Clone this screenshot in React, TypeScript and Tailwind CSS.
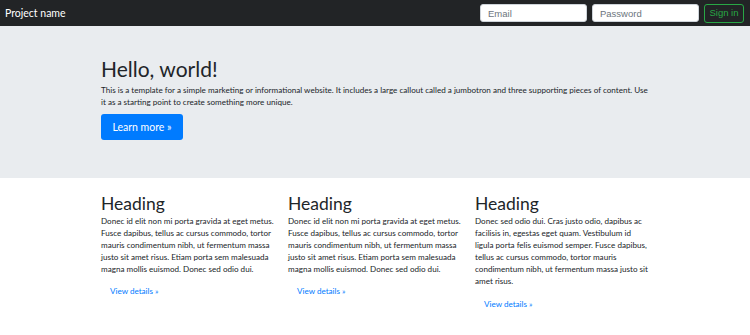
export default function App() {
  const cols = [
    'Donec id elit non mi porta gravida at eget metus. Fusce dapibus, tellus ac cursus commodo, tortor mauris condimentum nibh, ut fermentum massa justo sit amet risus. Etiam porta sem malesuada magna mollis euismod. Donec sed odio dui.',
    'Donec id elit non mi porta gravida at eget metus. Fusce dapibus, tellus ac cursus commodo, tortor mauris condimentum nibh, ut fermentum massa justo sit amet risus. Etiam porta sem malesuada magna mollis euismod. Donec sed odio dui.',
    'Donec sed odio dui. Cras justo odio, dapibus ac facilisis in, egestas eget quam. Vestibulum id ligula porta felis euismod semper. Fusce dapibus, tellus ac cursus commodo, tortor mauris condimentum nibh, ut fermentum massa justo sit amet risus.',
  ];

  return (
    <div className="w-[750px] h-[335px] bg-white text-[#212529] overflow-hidden font-['Lato',sans-serif]">
      {/* navbar */}
      <nav className="h-[26px] bg-[#222426] flex items-center justify-between pl-[5px] pr-[6px]">
        <span className="text-white text-[10.5px] leading-none">Project name</span>
        <div className="flex items-center gap-[5px] font-['Liberation_Sans',Arial,sans-serif]">
          <input
            className="w-[107px] h-[18px] bg-white rounded-[3px] border border-[#ced4da] px-[7px] text-[9.5px] text-[#495057] placeholder:text-[#6c757d] outline-none"
            placeholder="Email"
          />
          <input
            className="w-[107px] h-[18px] bg-white rounded-[3px] border border-[#ced4da] px-[7px] text-[9.5px] text-[#495057] placeholder:text-[#6c757d] outline-none"
            placeholder="Password"
          />
          <button className="w-[40px] h-[19px] rounded-[3px] border border-[#28a745] text-[#28a745] text-[9.5px] leading-none">
            Sign in
          </button>
        </div>
      </nav>

      {/* jumbotron */}
      <div className="h-[152px] bg-[#e9ecef] pt-[29px]">
        <div className="ml-[101px] w-[549px]">
          <h1 className="text-[21px] leading-[28px]">Hello, world!</h1>
          <p className="mt-[1px] text-[8.1px] leading-[12px] text-[#212529]">
            This is a template for a simple marketing or informational website. It includes a large callout called a jumbotron and three supporting pieces of content. Use it as a starting point to create something more unique.
          </p>
          <button className="mt-[6px] w-[82px] h-[26px] rounded-[3px] bg-[#007bff] text-white text-[10.5px] leading-none">
            Learn more »
          </button>
        </div>
      </div>

      {/* columns */}
      <div className="pl-[101px] pt-[15px] grid grid-cols-[175px_175px_175px] gap-x-[12px]">
        {cols.map((text, i) => (
          <div key={i}>
            <h2 className="text-[17.5px] leading-[22px]">Heading</h2>
            <p className="text-[8.1px] leading-[12.1px]">{text}</p>
            <a className="inline-block mt-[10px] ml-[9px] text-[8.1px] leading-[12px] text-[#007bff]">View details »</a>
          </div>
        ))}
      </div>
    </div>
  );
}
